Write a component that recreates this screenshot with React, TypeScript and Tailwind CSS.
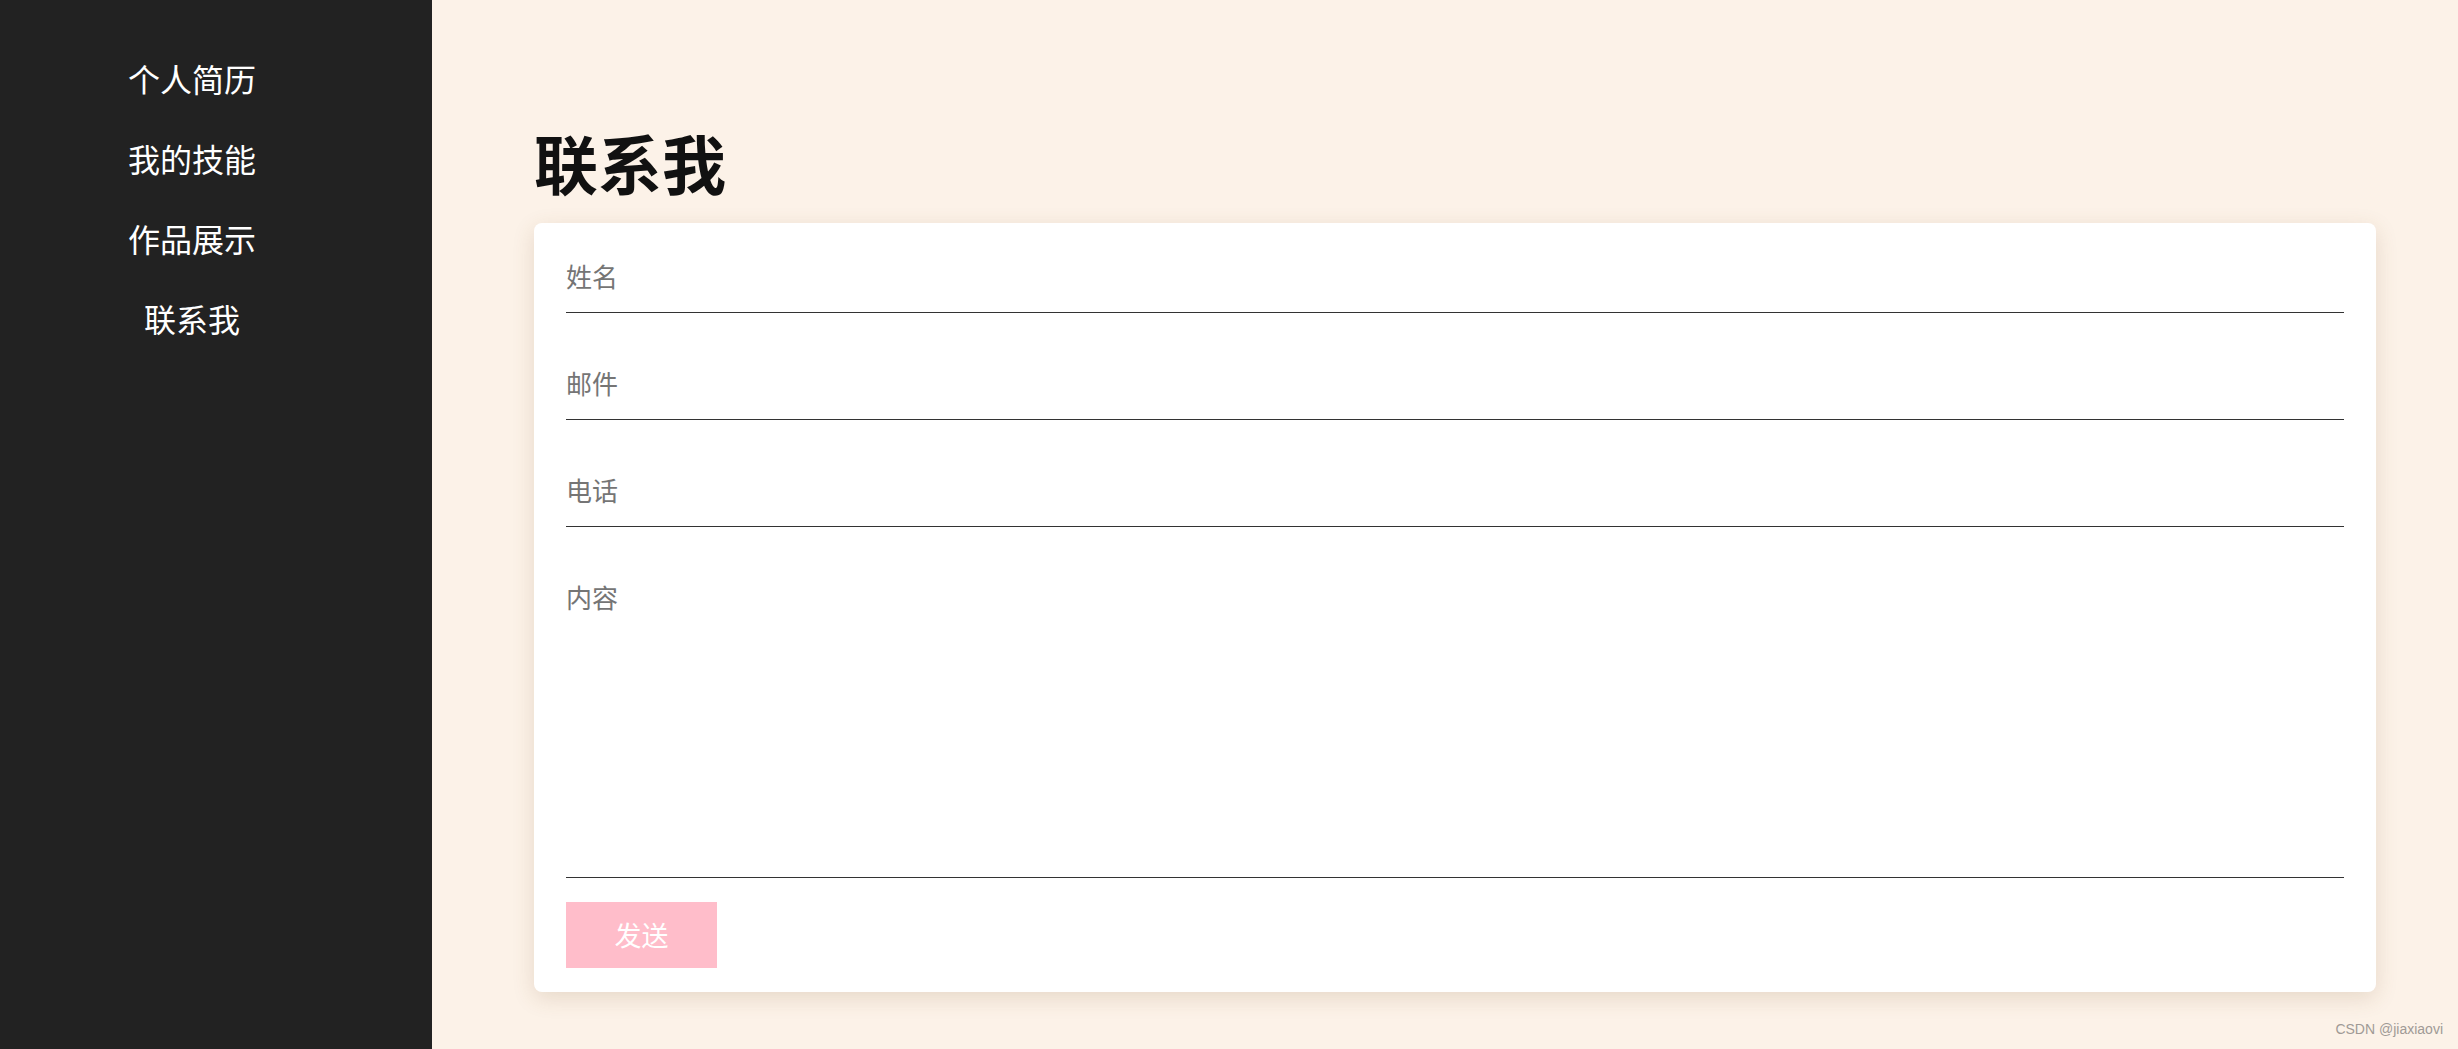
import React from 'react'

const navItems = ['个人简历', '我的技能', '作品展示', '联系我']

const font = { fontFamily: '"Noto Sans CJK SC", "Noto Sans", sans-serif' }

export default function App() {
  return (
    <div className="relative flex h-[1049px] w-full overflow-hidden bg-[#fcf2e8]" style={font}>
      {/* Sidebar */}
      <aside className="h-full w-[432px] shrink-0 bg-[#222222]">
        <ul className="w-[384px] pt-[38px]">
          {navItems.map((item) => (
            <li
              key={item}
              className="flex h-[80px] items-center justify-center text-[32px] text-white"
            >
              {item}
            </li>
          ))}
        </ul>
      </aside>

      {/* Content */}
      <main className="flex flex-1 flex-col pl-[102px] pr-[82px] pt-[129px]">
        <h1 className="mb-[30px] text-[64px] font-bold leading-none text-[#111111]">联系我</h1>

        <form className="flex flex-col rounded-lg bg-white px-[32px] pb-[24px] pt-[16px] shadow-[0_6px_22px_rgba(120,80,40,0.16)]">
          <input
            placeholder="姓名"
            className="h-[74px] border-b border-[#333333] text-[26px] outline-none placeholder:text-[#757575]"
          />
          <input
            placeholder="邮件"
            className="mt-[33px] h-[74px] border-b border-[#333333] text-[26px] outline-none placeholder:text-[#757575]"
          />
          <input
            placeholder="电话"
            className="mt-[33px] h-[74px] border-b border-[#333333] text-[26px] outline-none placeholder:text-[#757575]"
          />
          <textarea
            placeholder="内容"
            className="mt-[33px] h-[318px] resize-none border-b border-[#333333] pt-[17px] text-[26px] leading-[1.5] outline-none placeholder:text-[#757575]"
          />
          <button
            type="button"
            className="mt-[24px] h-[66px] w-[151px] bg-[#ffbdca] text-[27px] text-white"
          >
            发送
          </button>
        </form>
      </main>

      <span
        className="absolute bottom-[9px] right-[15px] text-[14px] text-[#a09a96]"
        style={{ fontFamily: '"Liberation Sans", Arial, sans-serif' }}
      >
        CSDN @jiaxiaovi
      </span>
    </div>
  )
}
